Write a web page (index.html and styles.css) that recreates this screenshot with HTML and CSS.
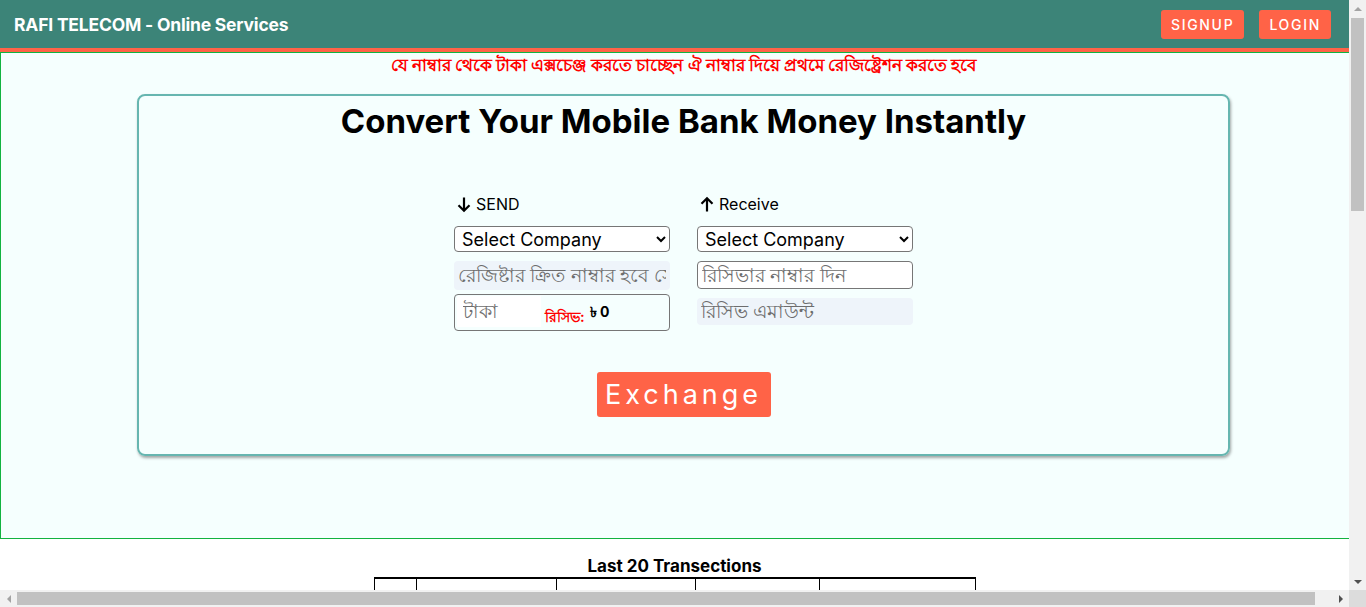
FILE: index.html
```html
<!DOCTYPE html>
<html lang="bn">
<head>
<meta charset="utf-8">
<title>RAFI TELECOM - Online Services</title>
<link rel="stylesheet" href="styles.css">
</head>
<body>
<header class="topbar">
  <div class="brand">RAFI TELECOM - Online Services</div>
  <nav class="auth">
    <a class="btn-auth" href="#">SIGNUP</a>
    <a class="btn-auth" href="#">LOGIN</a>
  </nav>
</header>

<section class="exchange-area">
  <p class="notice">যে নাম্বার থেকে টাকা এক্সচেঞ্জ করতে চাচ্ছেন ঐ নাম্বার দিয়ে প্রথমে রেজিষ্ট্রেশন করতে হবে</p>
  <div class="card">
    <h1 class="card-title">Convert Your Mobile Bank Money Instantly</h1>
    <div class="form-grid">
      <div class="col col-send">
        <div class="col-label"><svg class="arrow" viewBox="0 0 14 17" width="14" height="17"><path d="M7 1.5v13.5M1.5 9.2l5.5 5.6 5.5-5.6" fill="none" stroke="#000" stroke-width="2.2"/></svg>SEND</div>
        <select class="field select"><option>Select Company</option></select>
        <input class="field readonly bn" type="text" placeholder="রেজিষ্টার ক্রিত নাম্বার হবে সেন্ডার নাম্বার" readonly>
        <div class="amount-box">
          <input class="amount-input bn" type="text" placeholder="টাকা">
          <span class="recv-label">রিসিভ:</span>
          <span class="recv-val">৳ 0</span>
        </div>
      </div>
      <div class="col col-recv">
        <div class="col-label"><svg class="arrow" viewBox="0 0 14 17" width="14" height="17"><path d="M7 15.5V2M1.5 7.8L7 2.2l5.5 5.6" fill="none" stroke="#000" stroke-width="2.2"/></svg>Receive</div>
        <select class="field select"><option>Select Company</option></select>
        <input class="field bordered bn" type="text" placeholder="রিসিভার নাম্বার দিন">
        <input class="field readonly short bn" type="text" placeholder="রিসিভ এমাউন্ট" readonly>
      </div>
    </div>
    <button class="exchange-btn" type="button">Exchange</button>
  </div>
</section>

<section class="transactions">
  <h3 class="tx-title">Last 20 Transections</h3>
  <table class="tx-table">
    <tr>
      <th class="c1"></th><th class="c2"></th><th class="c3"></th><th class="c4"></th><th class="c5"></th>
    </tr>
    <tr>
      <td></td><td></td><td></td><td></td><td></td>
    </tr>
  </table>
</section>

<div class="vscroll" aria-hidden="true">
  <span class="sb-btn"><span class="tri tri-up off"></span></span>
  <span class="vthumb"></span>
  <span class="sb-btn"><span class="tri tri-down"></span></span>
</div>
<div class="hscroll" aria-hidden="true">
  <span class="sb-btn"><span class="tri tri-left off"></span></span>
  <span class="hthumb"></span>
  <span class="sb-btn"><span class="tri tri-right"></span></span>
</div>
<div class="sb-corner" aria-hidden="true"></div>
</body>
</html>
```

FILE: styles.css
```css
html {
  margin: 0;
  padding: 0;
  overflow: hidden;
}
body {
  margin: 0 17px 0 0;
  padding: 0;
  font-family: "Inter", "Noto Sans", sans-serif;
  color: #000;
  background: #fff;
}

.topbar {
  height: 48px;
  background: #3c8478;
  border-bottom: 4px solid #ff6347;
  display: flex;
  align-items: center;
  justify-content: space-between;
  padding: 0 18px 0 14px;
}
.brand {
  color: #fff;
  font-weight: 700;
  font-size: 17.5px;
  letter-spacing: -0.2px;
}
.auth {
  display: flex;
  gap: 15px;
}
.btn-auth {
  display: block;
  background: #ff6347;
  color: #fff;
  text-decoration: none;
  font-size: 14px;
  font-weight: 500;
  letter-spacing: 1.7px;
  height: 29px;
  line-height: 29px;
  padding: 0 10px;
  border-radius: 3px;
}

.exchange-area {
  width: 100%;
  padding: 0 8px 82px;
  border: 1px solid #12b340;
  background: #f5fffe;
}
.notice {
  margin: 1px 0 19px;
  text-align: center;
  color: #f00;
  font-weight: 700;
  font-size: 17.3px;
  line-height: 21px;
}

.card {
  width: 1089px;
  margin: 0 auto;
  border: 2px solid #66b6b0;
  border-radius: 8px;
  box-shadow: 1px 2px 3px rgba(0, 0, 0, 0.35);
  padding: 3px 0 37px;
  display: flex;
  flex-direction: column;
  align-items: center;
}
.card-title {
  margin: 0;
  font-size: 33px;
  line-height: 44px;
  font-weight: 700;
}

.form-grid {
  margin-top: 49px;
  display: flex;
  gap: 27px;
}
.col {
  width: 216px;
  display: flex;
  flex-direction: column;
}
.col-label {
  height: 24px;
  display: flex;
  align-items: center;
  gap: 5px;
  font-size: 16px;
  padding-left: 3px;
}
.arrow {
  display: block;
}
.field {
  box-sizing: border-box;
  width: 216px;
  margin: 0;
  font-family: "Inter", "Noto Sans", sans-serif;
  font-size: 18px;
  color: #000;
}
.bn {
  font-size: 19px;
}
.select {
  height: 26px;
  margin-top: 10px;
  border: 1px solid #767676;
  border-radius: 4px;
  background: #fff;
  padding: 0 3px;
}
.readonly {
  height: 29px;
  margin-top: 9px;
  border: none;
  border-radius: 4px;
  background: #eef4fa;
  padding: 0 4px;
}
.readonly.short {
  height: 27px;
}
.bordered {
  height: 28px;
  margin-top: 9px;
  border: 1px solid #767676;
  border-radius: 4px;
  background: #fff;
  padding: 0 4px;
}
.field::placeholder,
.amount-input::placeholder {
  color: #6d6d6d;
}

.amount-box {
  box-sizing: border-box;
  width: 216px;
  height: 37px;
  margin-top: 4px;
  border: 1px solid #767676;
  border-radius: 4px;
  display: flex;
  align-items: center;
  padding-left: 2px;
}
.amount-input {
  width: 84px;
  height: 31px;
  box-sizing: border-box;
  border: none;
  background: #fff;
  padding: 0 6px;
  font-family: "Inter", "Noto Sans", sans-serif;
  align-self: flex-start;
  margin-top: 1px;
}
.recv-label {
  color: #f00;
  font-weight: 700;
  font-size: 14px;
  margin: 10px 0 0 4px;
}
.recv-val {
  font-weight: 700;
  font-size: 14px;
  margin-left: 5px;
}

.exchange-btn {
  margin-top: 41px;
  width: 174px;
  height: 45px;
  border: none;
  border-radius: 3px;
  background: #ff6347;
  color: #fff;
  font-family: "Inter", "Noto Sans", sans-serif;
  font-size: 27px;
  letter-spacing: 4px;
  padding: 0;
}

.transactions {
  display: flex;
  flex-direction: column;
  align-items: center;
  padding-top: 17px;
}
.tx-title {
  margin: 0;
  font-size: 17px;
  line-height: 21px;
  font-weight: 700;
}
.tx-table {
  border-collapse: collapse;
}
.tx-table th,
.tx-table td {
  border: 1px solid #000;
  height: 30px;
  padding: 0;
}
.tx-table tr:first-child th {
  border-top: 2px solid #000;
}
.c1 { width: 41px; }
.c2 { width: 139px; }
.c3 { width: 138px; }
.c4 { width: 123px; }
.c5 { width: 155px; }

/* window scrollbars (overlay) */
.vscroll,
.hscroll {
  position: fixed;
  background: #f1f1f1;
  display: flex;
}
.vscroll {
  top: 0;
  right: 0;
  width: 17px;
  height: 590px;
  flex-direction: column;
}
.hscroll {
  left: 0;
  bottom: 0;
  width: 1349px;
  height: 17px;
}
.sb-corner {
  position: fixed;
  right: 0;
  bottom: 0;
  width: 17px;
  height: 17px;
  background: #dcdcdc;
}
.sb-btn {
  flex: 0 0 17px;
  width: 17px;
  height: 17px;
  display: flex;
  align-items: center;
  justify-content: center;
}
.vthumb {
  display: block;
  margin: 1px 2px 0;
  height: 193px;
  background: #c1c1c1;
}
.vscroll .sb-btn:last-child {
  margin-top: auto;
}
.hthumb {
  display: block;
  margin: 2px 0;
  width: 1298px;
  background: #c1c1c1;
}
.hscroll .sb-btn:last-child {
  margin-left: auto;
}
.tri {
  width: 0;
  height: 0;
  border-style: solid;
}
.tri-up {
  border-width: 0 4px 4px;
  border-color: transparent transparent #505050;
}
.tri-down {
  border-width: 4px 4px 0;
  border-color: #505050 transparent transparent;
}
.tri-left {
  border-width: 4px 4px 4px 0;
  border-color: transparent #505050 transparent transparent;
}
.tri-right {
  border-width: 4px 0 4px 4px;
  border-color: transparent transparent transparent #505050;
}
.tri-up.off {
  border-bottom-color: #a3a3a3;
}
.tri-left.off {
  border-right-color: #a3a3a3;
}
```
